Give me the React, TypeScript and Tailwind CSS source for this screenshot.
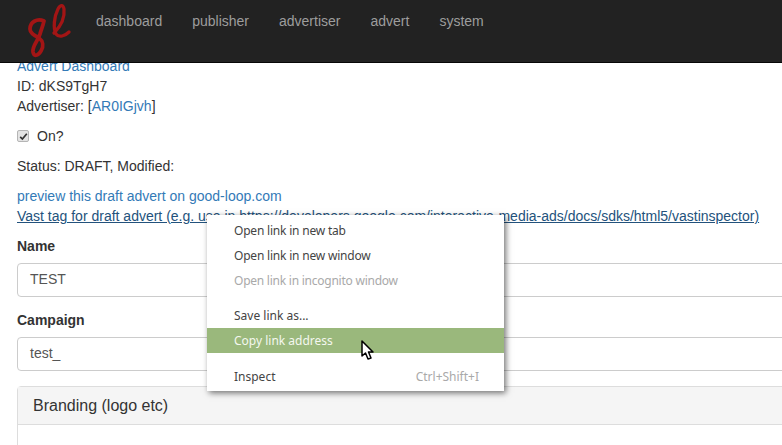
const navItems = ['dashboard', 'publisher', 'advertiser', 'advert', 'system'];

const Logo = () => (
  <svg width="50" height="62" viewBox="0 0 50 62" fill="none" className="absolute left-[25px] top-0">
    <path
      d="M19 21 C12 18 5 22 5 29 C5 33 10 36 14 38 C18 41 19 46 16 51 C13 56 9 57 8 52 C7 46 13 41 15 34 C16 30 18 26 19 21"
      stroke="#a31515"
      strokeWidth="3.8"
      strokeLinecap="round"
    />
    <path
      d="M29 33 C35 27 40 18 39 9 C38 4 35 5 33 9 C29 17 28 28 31 34 C34 38 40 36 44 32"
      stroke="#a31515"
      strokeWidth="3.3"
      strokeLinecap="round"
    />
  </svg>
);

const Cursor = () => (
  <svg width="16" height="22" viewBox="0 0 16 22" className="absolute left-[361px] top-[340px]">
    <path d="M1 1 L1 16 L4.5 13 L7 19 L10 18 L7.5 12 L12 12 Z" fill="#fff" stroke="#000" strokeWidth="1.5" strokeLinejoin="round" />
  </svg>
);

const MenuItem = ({
  label,
  hint,
  disabled,
  active,
  className = '',
}: {
  label: string;
  hint?: string;
  disabled?: boolean;
  active?: boolean;
  className?: string;
}) => (
  <div
    className={`flex h-[25px] items-center justify-between pl-[27px] pr-[25px] ${
      active ? 'bg-[#9ab87c] text-[#f4f7ef]' : disabled ? 'text-[#a9a9a9]' : 'text-[#444444]'
    }`}
  >
    <span className={className}>{label}</span>
    {hint && <span className="text-[#a9a9a9]">{hint}</span>}
  </div>
);

const ContextMenu = () => (
  <div className="absolute left-[207px] top-[215px] w-[297px] h-[176px] bg-white pt-[3px] text-[12px] font-['Noto_Sans',sans-serif] shadow-[2px_2px_6px_rgba(0,0,0,0.55)]">
    <MenuItem label="Open link in new tab" className="tracking-[-0.2px]" />
    <MenuItem label="Open link in new window" className="tracking-[-0.2px]" />
    <MenuItem label="Open link in incognito window" disabled className="tracking-[-0.24px]" />
    <div className="h-[10px]" />
    <MenuItem label="Save link as..." />
    <MenuItem label="Copy link address" active />
    <div className="h-[11px]" />
    <MenuItem label="Inspect" hint="Ctrl+Shift+I" />
  </div>
);

const Field = ({ label, value }: { label: string; value: string }) => (
  <div className="mb-[13px]">
    <label className="mb-[7px] block font-bold leading-[20px]">{label}</label>
    <div className="flex h-[34px] items-center rounded border border-[#cccccc] px-3 pb-[2px] text-[#555555]">{value}</div>
  </div>
);

const FakeCheckbox = () => (
  <span className="flex h-[12px] w-[12px] items-center justify-center rounded-[2px] border border-[#b5b5b5] bg-[#e4e4e4]">
    <svg width="9" height="9" viewBox="0 0 9 9" fill="none">
      <path d="M1.2 4.8 L3.4 7 L7.8 1.8" stroke="#333333" strokeWidth="1.7" />
    </svg>
  </span>
);

export default function App() {
  return (
    <div className="relative h-[445px] w-[782px] overflow-hidden bg-white font-['Liberation_Sans',sans-serif] text-[14px] leading-[20px] text-[#333333]">
      <div className="w-[820px] pl-[17px] pt-[56px]">
        <div>
          <a className="block text-[#337ab7]">Advert Dashboard</a>
          <div>ID: dKS9TgH7</div>
          <div>
            Advertiser: [<a className="text-[#337ab7]">AR0IGjvh</a>]
          </div>
        </div>
        <div className="mt-[10px] flex h-[20px] items-center">
          <FakeCheckbox />
          <span className="ml-[8px]">On?</span>
        </div>
        <div className="mt-[10px]">Status: DRAFT, Modified:</div>
        <div className="mt-[10px]">
          <a className="block text-[#337ab7]">preview this draft advert on good-loop.com</a>
          <a className="block text-[#23527c] underline">
            Vast tag for draft advert (e.g. use in https://developers.google.com/interactive-media-ads/docs/sdks/html5/vastinspector)
          </a>
        </div>
        <div className="mt-[10px]">
          <Field label="Name" value="TEST" />
          <Field label="Campaign" value="test_" />
        </div>
        <div className="mt-[2px] translate-y-[2px] rounded border border-[#dddddd]">
          <div className="flex h-[38px] items-center border-b border-[#dddddd] bg-[#f5f5f5] px-[15px] text-[16px] leading-[18px]">
            Branding (logo etc)
          </div>
          <div className="p-[15px]">
            <label className="block font-bold">Logo</label>
          </div>
        </div>
      </div>

      <div className="absolute inset-x-0 top-0 flex h-[63px] border-b border-[#080808] bg-[#222222] pl-[96px] pt-[11px] text-[#9d9d9d]">
        <div className="flex gap-[30px]">
          {navItems.map(item => (
            <span key={item}>{item}</span>
          ))}
        </div>
      </div>
      <Logo />
      <ContextMenu />
      <Cursor />
    </div>
  );
}
